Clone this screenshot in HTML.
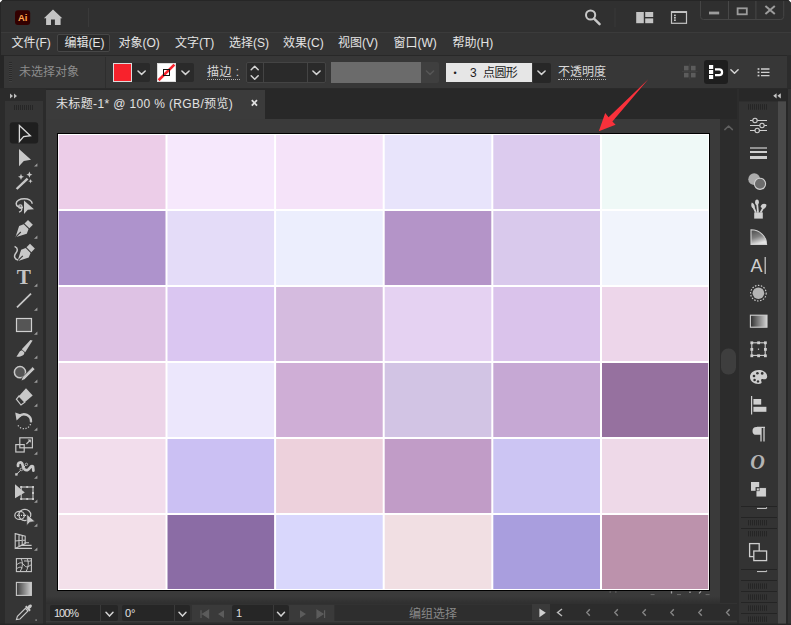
<!DOCTYPE html>
<html lang="zh-CN">
<head>
<meta charset="utf-8">
<title>未标题-1* @ 100 % (RGB/预览)</title>
<style>
*{box-sizing:border-box;margin:0;padding:0}
html,body{width:791px;height:625px;overflow:hidden;background:#323232}
body{font-family:"Liberation Sans","Noto Sans CJK SC",sans-serif;color:#d6d6d6;font-size:12px;position:relative}
.abs{position:absolute}
#titlebar{left:0;top:0;width:791px;height:32px;background:#303030}
#menubar{left:0;top:32px;width:791px;height:23px;background:#333333;box-shadow:inset 0 1px 0 #3b3b3b}
#menubar span{position:absolute;top:3px;height:17px;line-height:17px;font-size:12px;color:#e4e4e4;white-space:nowrap}
#editbox{left:57px;top:2px;width:53px;height:18px;background:#2a2a2a;border:1px solid #474747;border-radius:2px}
#ctrlbar{left:0;top:55px;width:791px;height:34px;background:#373737;box-shadow:inset 0 1px 0 #282828}
#tabbar{left:45px;top:89px;width:693px;height:30px;background:#282828}
#tab{left:1px;top:1px;width:219px;height:29px;background:#3b3b3b}
#tabtext{left:10px;top:6px;letter-spacing:0.36px;font-size:12px;line-height:17px;color:#e2e2e2;white-space:nowrap}
#canvas{left:45px;top:119px;width:675px;height:485px;background:#3a3a3a}
#vscroll{left:720px;top:119px;width:17px;height:485px;background:#2c2c2c}
#lefttool{left:0;top:89px;width:46px;height:536px;background:#353535}
#rightpanel{left:737px;top:89px;width:54px;height:536px;background:#333333}
#statusbar{left:46px;top:603px;width:691px;height:22px;background:#323232}
#artboard{left:56.7px;top:133px;width:653.5px;height:457.8px;background:#fff;border:1px solid #000}
.dk{position:absolute;background:#282828}
.t{position:absolute;white-space:nowrap}
</style>
</head>
<body>
<div id="titlebar" class="abs"></div>
<div id="menubar" class="abs">
<div id="editbox" class="abs"></div>
<span style="left:11.5px">文件(F)</span>
<span style="left:64.5px">编辑(E)</span>
<span style="left:118.5px">对象(O)</span>
<span style="left:175px">文字(T)</span>
<span style="left:229px">选择(S)</span>
<span style="left:283px">效果(C)</span>
<span style="left:338px">视图(V)</span>
<span style="left:393.5px">窗口(W)</span>
<span style="left:452.5px">帮助(H)</span>
</div>
<div id="ctrlbar" class="abs"></div>
<div class="abs" style="left:0;top:55px;width:4px;height:34px;background:#262626"></div>
<div class="abs" style="left:787px;top:55px;width:4px;height:34px;background:#2c2c2c"></div>
<div class="abs" style="left:9px;top:62px;width:3px;height:20px;background:repeating-linear-gradient(to bottom,#2a2a2a 0 1px,#404040 1px 2px)"></div>
<div class="t" style="left:19px;top:64px;font-size:12px;line-height:17px;color:#8c8c8c">未选择对象</div>
<div class="abs" style="left:105px;top:57px;width:1px;height:31px;background:#2e2e2e"></div>
<div class="abs" style="left:113px;top:63px;width:19px;height:19px;background:#f8222c;border:1px solid #dcdcdc"></div>
<div class="abs" style="left:132px;top:63px;width:18px;height:19px;background:#2a2a2a;border-radius:0 2px 2px 0"></div>
<div class="abs" style="left:157px;top:63px;width:19px;height:19px;background:#fff;border:1px solid #dcdcdc"></div>
<div class="abs" style="left:176px;top:63px;width:18px;height:19px;background:#2a2a2a;border-radius:0 2px 2px 0"></div>
<div class="t" style="left:207px;top:64px;font-size:12px;line-height:17px;color:#d8d8d8;border-bottom:1px dotted #b0b0b0;height:16px;letter-spacing:0.5px">描边 :</div>
<div class="abs" style="left:246px;top:62px;width:80px;height:21px;background:#2a2a2a;border:1px solid #444;border-radius:2px"></div>
<div class="abs" style="left:263px;top:63px;width:1px;height:19px;background:#444"></div>
<div class="abs" style="left:307px;top:63px;width:1px;height:19px;background:#444"></div>
<div class="abs" style="left:331px;top:62px;width:90px;height:21px;background:#6b6b6b"></div>
<div class="abs" style="left:421px;top:62px;width:18px;height:21px;background:#3f3f3f;border-radius:0 2px 2px 0"></div>
<div class="abs" style="left:446px;top:63px;width:86px;height:19px;background:#e6e6e6"></div>
<div class="t" style="left:453.6px;top:64.6px;font-size:9px;line-height:17px;color:#1e1e1e">•</div>
<div class="t" style="left:470px;top:65px;font-size:12px;line-height:17px;color:#1e1e1e">3</div>
<div class="t" style="left:483px;top:65px;font-size:12px;letter-spacing:-0.6px;line-height:17px;color:#1e1e1e">点圆形</div>
<div class="abs" style="left:533px;top:62.5px;width:17.5px;height:20px;background:#272727;border-radius:0 2px 2px 0"></div>
<div class="t" style="left:558px;top:64px;font-size:12px;line-height:17px;color:#d8d8d8;border-bottom:1px dotted #b0b0b0;height:16px">不透明度</div>
<div class="abs" style="left:704px;top:60px;width:24px;height:24px;background:#1e1e1e;border-radius:3px"></div>
<div class="abs" style="left:0;top:88px;width:791px;height:1px;background:#2a2a2a"></div>

<div id="tabbar" class="abs"><div id="tab" class="abs"><div id="tabtext" class="abs">未标题-1* @ 100 % (RGB/预览)</div></div></div>
<div id="canvas" class="abs"></div>
<div id="vscroll" class="abs"></div>
<div id="lefttool" class="abs"></div>
<div id="rightpanel" class="abs"></div>
<div id="statusbar" class="abs"></div>
<div class="abs" style="left:50px;top:605px;width:68px;height:16px;background:#262626;border-radius:2px"></div>
<div class="abs" style="left:100px;top:605px;width:1px;height:16px;background:#3a3a3a"></div>
<div class="t" style="left:54px;top:605px;font-size:11px;letter-spacing:-1px;line-height:16px;color:#e0e0e0">100%</div>
<div class="abs" style="left:122px;top:605px;width:68px;height:16px;background:#262626;border-radius:2px"></div>
<div class="abs" style="left:174px;top:605px;width:1px;height:16px;background:#3a3a3a"></div>
<div class="t" style="left:125px;top:605px;font-size:11px;line-height:16px;color:#e0e0e0">0°</div>
<div class="abs" style="left:192px;top:605px;width:142px;height:16px;background:#3a3a3a"></div>
<div class="abs" style="left:232px;top:605px;width:57px;height:16px;background:#262626;border-radius:2px"></div>
<div class="abs" style="left:273px;top:605px;width:1px;height:16px;background:#3a3a3a"></div>
<div class="t" style="left:236px;top:605px;font-size:11px;line-height:16px;color:#e0e0e0">1</div>
<div class="abs" style="left:335px;top:605px;width:199px;height:17px;background:#2e2e2e"></div>
<div class="t" style="left:409px;top:606px;font-size:12px;line-height:17px;color:#888">编组选择</div>
<div class="abs" style="left:550px;top:604px;width:187px;height:16px;background:#2c2c2c"></div>
<div class="abs" style="left:46px;top:621px;width:691px;height:1px;background:#3b3b3b"></div>
<div id="playbtn" class="abs" style="left:532px;top:604px;width:18px;height:16px;background:#3a3a3a"></div>
<div class="abs" style="left:46px;top:596px;width:674px;height:8px;background:linear-gradient(to bottom,#3a3a3a,#2f2f2f)"></div>

<div id="artboard" class="abs"></div>
<svg class="abs" style="left:0;top:0" width="791" height="625" viewBox="0 0 791 625" id="grid">
<rect x="58.7" y="135" width="106.8" height="74" fill="#ECCDE8"/>
<rect x="167.5" y="135" width="106.6" height="74" fill="#F6E8FC"/>
<rect x="276.1" y="135" width="106.6" height="74" fill="#F5E3F9"/>
<rect x="384.7" y="135" width="106.6" height="74" fill="#E8E4FB"/>
<rect x="493.3" y="135" width="106.7" height="74" fill="#DCCBEE"/>
<rect x="602.0" y="135" width="106.2" height="74" fill="#EFF9F7"/>
<rect x="58.7" y="211" width="106.8" height="74" fill="#AE93CC"/>
<rect x="167.5" y="211" width="106.6" height="74" fill="#E4DCF8"/>
<rect x="276.1" y="211" width="106.6" height="74" fill="#ECEEFD"/>
<rect x="384.7" y="211" width="106.6" height="74" fill="#B494C8"/>
<rect x="493.3" y="211" width="106.7" height="74" fill="#D9C9EC"/>
<rect x="602.0" y="211" width="106.2" height="74" fill="#F1F4FC"/>
<rect x="58.7" y="287" width="106.8" height="74" fill="#DEC2E4"/>
<rect x="167.5" y="287" width="106.6" height="74" fill="#DAC6F1"/>
<rect x="276.1" y="287" width="106.6" height="74" fill="#D5BBDF"/>
<rect x="384.7" y="287" width="106.6" height="74" fill="#E5D2F2"/>
<rect x="493.3" y="287" width="106.7" height="74" fill="#DAC3EB"/>
<rect x="602.0" y="287" width="106.2" height="74" fill="#EDD6EA"/>
<rect x="58.7" y="363" width="106.8" height="74" fill="#ECD4E8"/>
<rect x="167.5" y="363" width="106.6" height="74" fill="#ECE7FC"/>
<rect x="276.1" y="363" width="106.6" height="74" fill="#CFAED6"/>
<rect x="384.7" y="363" width="106.6" height="74" fill="#D2C4E4"/>
<rect x="493.3" y="363" width="106.7" height="74" fill="#C6A8D4"/>
<rect x="602.0" y="363" width="106.2" height="74" fill="#96719F"/>
<rect x="58.7" y="439" width="106.8" height="74" fill="#F2DDEC"/>
<rect x="167.5" y="439" width="106.6" height="74" fill="#CBC0F3"/>
<rect x="276.1" y="439" width="106.6" height="74" fill="#EDD1DC"/>
<rect x="384.7" y="439" width="106.6" height="74" fill="#C19CC7"/>
<rect x="493.3" y="439" width="106.7" height="74" fill="#CCC5F3"/>
<rect x="602.0" y="439" width="106.2" height="74" fill="#EED9E8"/>
<rect x="58.7" y="515" width="106.8" height="74" fill="#F3E0EA"/>
<rect x="167.5" y="515" width="106.6" height="74" fill="#8B6CA5"/>
<rect x="276.1" y="515" width="106.6" height="74" fill="#D9D7FC"/>
<rect x="384.7" y="515" width="106.6" height="74" fill="#F1DFE3"/>
<rect x="493.3" y="515" width="106.7" height="74" fill="#A99EDE"/>
<rect x="602.0" y="515" width="106.2" height="74" fill="#BC92AC"/>
</svg>
<svg class="abs" style="left:0;top:0" width="791" height="625" viewBox="0 0 791 625" id="icons">
<path d="M138.0 71.0L141.6 74.4L145.2 71.0" fill="none" stroke="#d4d4d4" stroke-width="1.5" stroke-linecap="round" stroke-linejoin="round"/>
<path d="M181.9 71.0L185.5 74.4L189.1 71.0" fill="none" stroke="#d4d4d4" stroke-width="1.5" stroke-linecap="round" stroke-linejoin="round"/>
<path d="M251.2 69.8L254.7 66.2L258.2 69.8" fill="none" stroke="#d4d4d4" stroke-width="1.5" stroke-linecap="round" stroke-linejoin="round"/>
<path d="M251.2 75.7L254.7 79.3L258.2 75.7" fill="none" stroke="#d4d4d4" stroke-width="1.5" stroke-linecap="round" stroke-linejoin="round"/>
<path d="M312.9 71.0L316.5 74.4L320.1 71.0" fill="none" stroke="#d4d4d4" stroke-width="1.5" stroke-linecap="round" stroke-linejoin="round"/>
<path d="M426.4 71.0L430.0 74.4L433.6 71.0" fill="none" stroke="#565656" stroke-width="1.5" stroke-linecap="round" stroke-linejoin="round"/>
<path d="M537.9 71.0L541.5 74.4L545.1 71.0" fill="none" stroke="#d4d4d4" stroke-width="1.5" stroke-linecap="round" stroke-linejoin="round"/>
<path d="M730.9 69.8L734.5 73.2L738.1 69.8" fill="none" stroke="#d4d4d4" stroke-width="1.5" stroke-linecap="round" stroke-linejoin="round"/>
<path d="M106.0 612.3L109.5 616.1L113.0 612.3" fill="none" stroke="#d4d4d4" stroke-width="1.5" stroke-linecap="round" stroke-linejoin="round"/>
<path d="M179.0 612.3L182.5 616.1L186.0 612.3" fill="none" stroke="#d4d4d4" stroke-width="1.5" stroke-linecap="round" stroke-linejoin="round"/>
<path d="M277.5 612.3L281.0 616.1L284.5 612.3" fill="none" stroke="#d4d4d4" stroke-width="1.5" stroke-linecap="round" stroke-linejoin="round"/>
<path d="M158.6 80.2L174.4 64.6" stroke="#f8222c" stroke-width="2.6" fill="none"/>
<rect x="163.5" y="69.5" width="6" height="6" fill="none" stroke="#111" stroke-width="1"/>
<path d="M648.3 79.3L608.6 117.3L605.2 113L598.8 131.2L615.6 124.8L612.4 121.6Z" fill="#f9313b"/><!-- title bar -->
<rect x="15" y="10.3" width="15.2" height="14.7" rx="3" fill="#330000"/>
<text x="18" y="21.2" font-family="Liberation Sans, sans-serif" font-weight="bold" font-size="9.5" fill="#ffa64d" textLength="9.4" lengthAdjust="spacingAndGlyphs">Ai</text>
<path d="M53 9.4L62.3 18.3H60.6V25H54.9V19.4H51V25H46.1V18.3H43.9Z" fill="#c4c4c4"/>
<rect x="88" y="8" width="1" height="19" fill="#3a3a3a"/>
<!-- search -->
<circle cx="590.6" cy="15" r="4.6" fill="none" stroke="#c8c8c8" stroke-width="2"/>
<path d="M594 18.6L599.6 24.2" stroke="#c8c8c8" stroke-width="2.4" stroke-linecap="round"/>
<rect x="614.5" y="8" width="1" height="19" fill="#383838"/>
<!-- layout icon -->
<rect x="636.2" y="12" width="7.6" height="11.2" fill="#c4c4c4"/>
<rect x="645.2" y="12" width="8" height="5" fill="#c4c4c4"/>
<rect x="645.2" y="18.4" width="8" height="4.8" fill="#c4c4c4"/>
<!-- window icon -->
<rect x="671.5" y="11.7" width="15" height="11.6" fill="none" stroke="#c4c4c4" stroke-width="1.2"/>
<rect x="671.5" y="11.4" width="15" height="1.6" fill="#c4c4c4"/>
<rect x="674" y="14.6" width="1.8" height="1.6" fill="#c4c4c4"/>
<rect x="674" y="17" width="1.8" height="1.6" fill="#c4c4c4"/>
<rect x="674" y="19.4" width="1.8" height="1.6" fill="#c4c4c4"/>
<!-- window controls -->
<path d="M700.5 0V16.5Q700.5 19.5 703.5 19.5H780.7Q783.7 19.5 783.7 16.5V0" fill="#2f2f2f" stroke="#454545" stroke-width="1"/>
<path d="M728.5 0V19.5M755.9 0V19.5" stroke="#484848" stroke-width="1"/>
<rect x="709" y="11.6" width="10.2" height="2.8" fill="#9c9c9c"/>
<rect x="737.6" y="8.3" width="9.2" height="6" fill="none" stroke="#9c9c9c" stroke-width="1.8"/>
<path d="M765.4 6L774.8 14M774.8 6L765.4 14" stroke="#9c9c9c" stroke-width="2"/>
<!-- control bar right icons -->
<rect x="684" y="65.8" width="4.6" height="4.6" fill="#5c5c5c"/>
<rect x="691" y="65.8" width="4.6" height="4.6" fill="#5c5c5c"/>
<rect x="684" y="72.8" width="4.6" height="4.6" fill="#5c5c5c"/>
<rect x="691" y="72.8" width="4.6" height="4.6" fill="#5c5c5c"/>
<path d="M689.8 63.5V79.5M682 71.6H697.6" stroke="#424242" stroke-width="1"/>
<rect x="709" y="65" width="4.2" height="4" fill="#fff"/>
<rect x="709" y="70" width="4.2" height="4" fill="#fff"/>
<rect x="709" y="75" width="4.2" height="4" fill="#fff"/>
<path d="M715 69.3H719.2A2.9 2.9 0 0 1 719.2 75.1H715" fill="none" stroke="#fff" stroke-width="2.2"/>
<!-- list icon -->
<path d="M761 69H769.5M761 72.3H769.5M761 75.6H769.5" stroke="#d0d0d0" stroke-width="1.3"/>
<rect x="757.6" y="68.2" width="1.8" height="1.6" fill="#d0d0d0"/>
<rect x="757.6" y="71.5" width="1.8" height="1.6" fill="#d0d0d0"/>
<rect x="757.6" y="74.8" width="1.8" height="1.6" fill="#d0d0d0"/>
<!-- tab close -->
<path d="M251.8 100.2L257 105.6M257 100.2L251.8 105.6" stroke="#e0e0e0" stroke-width="1.8"/>
<!-- LEFT TOOLBAR -->
<rect x="0" y="89" width="5" height="536" fill="#2b2b2b"/>
<rect x="43" y="89" width="3" height="536" fill="#2b2b2b"/>
<rect x="5" y="89" width="38" height="12" fill="#2b2b2b"/>
<path d="M10 93.4L13 96L10 98.6ZM14 93.4L17 96L14 98.6Z" fill="#bdbdbd"/>
<path d="M14.5 105V110M16.5 105V110M18.5 105V110M20.5 105V110M22.5 105V110M24.5 105V110M26.5 105V110M28.5 105V110M30.5 105V110M32.5 105V110" stroke="#262626" stroke-width="1"/>
<rect x="9.8" y="122.2" width="28.4" height="21.3" rx="3" fill="#1f1f1f"/>
<!-- selection -->
<path d="M19.4 125.6L30.4 135.7L23.6 136.6L19.4 141.5Z" fill="none" stroke="#dadada" stroke-width="1.3" stroke-linejoin="miter"/>
<!-- direct selection -->
<path d="M19 149L31 159.8L23.8 161L19 166.3Z" fill="#c8c8c8"/>
<!-- magic wand -->
<path d="M16.6 189L27.6 178.6" stroke="#c8c8c8" stroke-width="2.4"/>
<path d="M21 173.8L21.9 176L24 176.8L21.9 177.7L21 180L20.1 177.7L18 176.8L20.1 176Z" fill="#c8c8c8"/>
<path d="M29.4 171.6L30.3 173.8L32.4 174.7L30.3 175.6L29.4 177.8L28.5 175.6L26.4 174.7L28.5 173.8Z" fill="#c8c8c8"/>
<path d="M30.5 179L31.1 180.6L32.7 181.2L31.1 181.8L30.5 183.4L29.9 181.8L28.3 181.2L29.9 180.6Z" fill="#c8c8c8"/>
<!-- lasso -->
<path d="M23 207.6C18 207.6 16.2 205.6 16.2 203.6C16.2 200.6 20 198.8 24.2 198.8C28.6 198.8 32.2 200.8 32.2 203.8" fill="none" stroke="#c8c8c8" stroke-width="1.5"/>
<circle cx="20.3" cy="206.6" r="1.7" fill="none" stroke="#c8c8c8" stroke-width="1.2"/>
<path d="M21.6 207.8C22.4 210 21 211.6 19 212.2" fill="none" stroke="#c8c8c8" stroke-width="1.3"/>
<path d="M24 200.4L34 209.2L27.8 209.8L24 214Z" fill="#c8c8c8"/>
<!-- pen -->
<g transform="translate(23.4 229.4) rotate(45) scale(1.08)">
<path d="M0 10.4L-5 0.6L-3.2 -3.6H3.2L5 0.6Z" fill="#c8c8c8"/>
<path d="M0 10.4V3.4" stroke="#353535" stroke-width="1"/>
<rect x="-3.2" y="-9.2" width="6.4" height="4.6" fill="#c8c8c8"/>
</g>
<!-- curvature -->
<g transform="translate(25.4 253.2) rotate(45) scale(1.08)">
<path d="M0 10.4L-5 0.6L-3.2 -3.6H3.2L5 0.6Z" fill="#c8c8c8"/>
<path d="M0 10.4V3.4" stroke="#353535" stroke-width="1"/>
<rect x="-3.2" y="-9.2" width="6.4" height="4.6" fill="#c8c8c8"/>
</g>
<path d="M14.6 246.4C18.6 248.4 17.6 251 15.6 253.4C13.6 256.4 14.6 259.4 18 260" fill="none" stroke="#c8c8c8" stroke-width="1.5"/>
<!-- type -->
<text x="16.8" y="283.7" font-family="Liberation Serif, serif" font-weight="bold" font-size="20.5" fill="#c4c4c4" textLength="14.2" lengthAdjust="spacingAndGlyphs">T</text>
<!-- line -->
<path d="M17 307.4L31 293.6" stroke="#c8c8c8" stroke-width="1.7"/>
<!-- rect -->
<rect x="16.5" y="318.5" width="15" height="13" fill="#555" stroke="#d0d0d0" stroke-width="1.2"/>
<!-- brush -->
<path d="M32.6 340.6L30.4 340L21.8 349.2L25.2 352.2Z" fill="#c8c8c8"/>
<path d="M22 350.2L24.4 352.4C24.6 355 21 357 16.2 356.6C18.4 355 18.6 351 22 350.2Z" fill="#c8c8c8"/>
<!-- shaper -->
<circle cx="20" cy="372.2" r="5.6" fill="#555" stroke="#c8c8c8" stroke-width="1.5"/>
<path d="M32.6 366.8L35 369.2L24.6 379.6L21 381L22.2 377.2Z" fill="#c8c8c8" stroke="#353535" stroke-width="0.8"/>
<!-- eraser -->
<path d="M26 388.3L32.7 395.4L24.8 402.2L19 396Z" fill="#c8c8c8"/>
<path d="M19 396L24.8 402.2L21 405L16.4 399.2Z" fill="none" stroke="#c8c8c8" stroke-width="1.2"/>
<!-- rotate -->
<path d="M19 416.4A7 7 0 0 1 31 421.8" fill="none" stroke="#c8c8c8" stroke-width="2.4"/>
<path d="M31 421.4A7 7 0 0 1 17.4 424" fill="none" stroke="#c8c8c8" stroke-width="1.3" stroke-dasharray="1.2 1.6"/>
<path d="M15.2 412.6L22.4 415L16.6 420.6Z" fill="#c8c8c8"/>
<!-- scale -->
<rect x="19.8" y="437.8" width="12.6" height="10" fill="none" stroke="#c8c8c8" stroke-width="1.2"/>
<rect x="15.8" y="444.6" width="8.4" height="7.4" fill="none" stroke="#c8c8c8" stroke-width="1.2"/>
<path d="M26.4 444L30 440.4" stroke="#c8c8c8" stroke-width="1.2"/>
<path d="M27.6 439.6H30.8V442.8Z" fill="#c8c8c8"/>
<!-- warp -->
<path d="M18 466C17.6 461.6 21.8 461.4 22.6 465C23.4 469 25.4 471.4 28.2 469.6C30.4 468 31.2 465 33 466.6L33.4 470.6" fill="none" stroke="#c8c8c8" stroke-width="2.7" stroke-linecap="round" stroke-linejoin="round"/>
<path d="M16.8 474L26 465" stroke="#c8c8c8" stroke-width="1"/>
<rect x="15.2" y="473.2" width="2.4" height="2.4" fill="#c8c8c8"/>
<circle cx="21.4" cy="469.4" r="1.3" fill="#353535" stroke="#c8c8c8" stroke-width="0.8"/>
<circle cx="26.4" cy="464.4" r="1.2" fill="#353535" stroke="#c8c8c8" stroke-width="0.8"/>
<!-- free transform -->
<rect x="21.2" y="487" width="11.8" height="12" fill="#3c3c3c" stroke="#c8c8c8" stroke-width="1.1"/>
<path d="M15 484.2L24.8 492.6L15 498.2Z" fill="#c8c8c8"/>
<rect x="20.2" y="486" width="2" height="2" fill="#c8c8c8"/><rect x="26.2" y="486" width="2" height="2" fill="#c8c8c8"/><rect x="32" y="486" width="2" height="2" fill="#c8c8c8"/>
<rect x="32" y="492" width="2" height="2" fill="#c8c8c8"/>
<rect x="20.2" y="498" width="2" height="2" fill="#c8c8c8"/><rect x="26.2" y="498" width="2" height="2" fill="#c8c8c8"/><rect x="32" y="498" width="2" height="2" fill="#c8c8c8"/>
<!-- shape builder -->
<ellipse cx="19.6" cy="515.4" rx="4.8" ry="4" fill="none" stroke="#c8c8c8" stroke-width="1.2"/>
<ellipse cx="24.8" cy="515" rx="6" ry="5.6" fill="none" stroke="#c8c8c8" stroke-width="1.2"/>
<path d="M17 515.4H26" stroke="#d8d8d8" stroke-width="1.2" stroke-dasharray="1 1"/>
<path d="M26.8 514.2L35 521.6L29.8 522.2L26.8 525.4Z" fill="#c8c8c8" stroke="#353535" stroke-width="0.6"/>
<!-- perspective grid -->
<path d="M15.2 533.6L25.2 536.2V543.6L15.2 548.4ZM19 534.6V546.6M22.2 535.4V545M15.2 541L25.2 540" fill="none" stroke="#c8c8c8" stroke-width="1.1"/>
<path d="M15.2 548.4H32M20.6 545.4H31.6M24.4 542.8H29" stroke="#c8c8c8" stroke-width="1.1"/>
<!-- mesh -->
<rect x="16.4" y="558.6" width="15" height="13" fill="none" stroke="#c8c8c8" stroke-width="1.1"/>
<path d="M16.4 565C20 562 22 562 24 565C26 568 28 567 31.4 564.6M21 558.6C23 562 23 567 20 571.6M27 558.6C29 562 28.6 567 26 571.6M16.4 569C19 566.6 21 567 22.4 568M24 561C27 560.6 29 562 31.4 560.6" fill="none" stroke="#c8c8c8" stroke-width="1"/>
<!-- gradient -->
<defs><linearGradient id="gl" x1="0" x2="1" y1="0" y2="0"><stop offset="0" stop-color="#3a3a3a"/><stop offset="1" stop-color="#d0d0d0"/></linearGradient></defs>
<rect x="16.4" y="582.4" width="15" height="13" fill="url(#gl)" stroke="#c8c8c8" stroke-width="1.1"/>
<!-- eyedropper -->
<path d="M16.4 619.6L17.4 616.4L25.4 608.4L28 611L20 619Z" fill="#353535" stroke="#c8c8c8" stroke-width="1.1"/>
<path d="M25 607L29.4 611.4L30.8 610L29.6 608.8C32 607.4 32.4 605.6 31.4 604.8C30.4 604 28.8 604.4 27.6 606.8L26.4 605.6Z" fill="#c8c8c8"/>
<!-- submenu triangles -->
<path d="M34 166.6H37.4V163.2ZM34 238.8H37.4V235.4ZM34 286.8H37.4V283.4ZM34 310.8H37.4V307.4ZM34 334.8H37.4V331.4ZM34 358.8H37.4V355.4ZM34 382.8H37.4V379.4ZM34 406.8H37.4V403.4ZM34 430.8H37.4V427.4ZM34 454.8H37.4V451.4ZM34 478.8H37.4V475.4ZM34 502.8H37.4V499.4ZM34 526.8H37.4V523.4ZM34 550.8H37.4V547.4Z" fill="#9a9a9a"/>
<rect x="35.4" y="619.4" width="1.4" height="1.4" fill="#9a9a9a"/>
<!-- RIGHT PANEL -->
<rect x="737" y="89" width="2" height="536" fill="#2c2c2c"/>
<rect x="739" y="89" width="48" height="12.4" fill="#282828"/>
<rect x="778" y="101.4" width="8" height="524" fill="#4a4a4a"/>
<rect x="786" y="89" width="2" height="536" fill="#272727"/>
<path d="M776.6 93.2L773.2 95.8L776.6 98.4ZM780.8 93.2L777.4 95.8L780.8 98.4Z" fill="#c4c4c4"/>
<path d="M748.5 104.2V109.6M750.5 104.2V109.6M752.5 104.2V109.6M754.5 104.2V109.6M756.5 104.2V109.6M758.5 104.2V109.6M760.5 104.2V109.6M762.5 104.2V109.6M764.5 104.2V109.6M766.5 104.2V109.6" stroke="#252525" stroke-width="1"/>
<path d="M750 120.5H767M750 125.5H767M750 130.5H767" stroke="#cfcfcf" stroke-width="1.2"/>
<circle cx="755" cy="120.5" r="2.2" fill="#333333" stroke="#cfcfcf" stroke-width="1.1"/>
<circle cx="762" cy="125.5" r="2.2" fill="#333333" stroke="#cfcfcf" stroke-width="1.1"/>
<circle cx="757.2" cy="130.5" r="2.2" fill="#333333" stroke="#cfcfcf" stroke-width="1.1"/>
<rect x="750" y="147.4" width="17" height="1.2" fill="#cfcfcf"/><rect x="750" y="151" width="17" height="2" fill="#cfcfcf"/><rect x="750" y="156" width="17" height="3" fill="#cfcfcf"/>
<circle cx="754.2" cy="179.2" r="5.9" fill="#acacac"/>
<circle cx="760" cy="183.8" r="5.6" fill="#6c6c6c" stroke="#cfcfcf" stroke-width="1.1"/>
<rect x="754.2" y="212.4" width="8.6" height="6.2" fill="#cfcfcf"/>
<path d="M756 212.6L753.4 207M758 212.6L757.2 204M760.6 212.6L763.4 207.4" stroke="#cfcfcf" stroke-width="1.8"/>
<path d="M751.8 202.6C754.2 203.6 755.4 206 754.4 208.6C751.8 208.8 750.4 206 751.8 202.6Z" fill="#cfcfcf"/>
<ellipse cx="757" cy="202.2" rx="1.9" ry="2.8" fill="#cfcfcf"/>
<path d="M760.6 207C760.8 204.2 763.4 202.8 766.2 204.2C766.8 206.2 765.4 208.4 763.4 209Z" fill="#cfcfcf"/>
<defs><linearGradient id="cg" x1="0" x2="0.35" y1="0" y2="1"><stop offset="0" stop-color="#4a4a4a"/><stop offset="0.55" stop-color="#808080"/><stop offset="1" stop-color="#e4e4e4"/></linearGradient></defs>
<path d="M751 244.4V229.8A15.6 14.6 0 0 1 766.6 244.4Z" fill="url(#cg)" stroke="#cfcfcf" stroke-width="1.1"/>
<text x="750.6" y="272" font-family="Liberation Sans, sans-serif" font-size="18" fill="#cfcfcf" textLength="12" lengthAdjust="spacingAndGlyphs">A</text>
<path d="M765.2 257V274" stroke="#cfcfcf" stroke-width="1.2"/>
<circle cx="758.4" cy="293.2" r="5.8" fill="#b4b4b4"/>
<circle cx="758.4" cy="293.2" r="7.8" fill="none" stroke="#cfcfcf" stroke-width="1.1" stroke-dasharray="1.5 1.5"/>
<defs><linearGradient id="gr" x1="0" x2="1" y1="0" y2="0"><stop offset="0" stop-color="#2e2e2e"/><stop offset="1" stop-color="#d4d4d4"/></linearGradient></defs>
<rect x="750.4" y="315.2" width="16.6" height="12" fill="url(#gr)" stroke="#cfcfcf" stroke-width="1.1"/>
<rect x="751.8" y="342.8" width="13.4" height="12.6" fill="none" stroke="#cfcfcf" stroke-width="1.1"/>
<rect x="750.4" y="341.40000000000003" width="2.8" height="2.8" fill="#cfcfcf"/>
<rect x="750.4" y="348.0" width="2.8" height="2.8" fill="#cfcfcf"/>
<rect x="750.4" y="354.40000000000003" width="2.8" height="2.8" fill="#cfcfcf"/>
<rect x="757.1999999999999" y="341.40000000000003" width="2.8" height="2.8" fill="#cfcfcf"/>
<rect x="757.9" y="348.59999999999997" width="1.2" height="1.2" fill="#cfcfcf"/>
<rect x="757.1999999999999" y="354.40000000000003" width="2.8" height="2.8" fill="#cfcfcf"/>
<rect x="764.0" y="341.40000000000003" width="2.8" height="2.8" fill="#cfcfcf"/>
<rect x="764.0" y="348.0" width="2.8" height="2.8" fill="#cfcfcf"/>
<rect x="764.0" y="354.40000000000003" width="2.8" height="2.8" fill="#cfcfcf"/>
<path d="M758.6 370C763.6 370 767.2 373 767.2 376.4C767.2 379 765 379.6 763.2 379.2C761.4 378.8 760.6 380 761.4 381.4C762.2 383 761 384 758.6 384C753.6 384 750 381 750 377C750 373 753.6 370 758.6 370Z" fill="#cfcfcf"/>
<circle cx="754" cy="376" r="1.3" fill="#333333"/>
<circle cx="757.4" cy="373.2" r="1.3" fill="#333333"/>
<circle cx="762.2" cy="373.4" r="1.3" fill="#333333"/>
<circle cx="754.6" cy="380" r="1.3" fill="#333333"/>
<circle cx="758" cy="381.4" r="1.2" fill="#333333"/>
<path d="M751.6 396V414.6" stroke="#cfcfcf" stroke-width="1.2"/>
<rect x="753.4" y="399" width="7.8" height="5.6" fill="#cfcfcf"/><rect x="753.4" y="406.8" width="13" height="5" fill="#cfcfcf"/>
<path d="M764 427V441.6M761 427V441.6M765 427.4H757" stroke="#cfcfcf" stroke-width="1.3" fill="none"/>
<path d="M761 427H756.4A3.9 3.9 0 0 0 756.4 434.8H761Z" fill="#cfcfcf"/>
<text x="750.2" y="468.6" font-family="Liberation Serif, serif" font-style="italic" font-weight="bold" font-size="20" fill="#b4b4b4" textLength="14.6" lengthAdjust="spacingAndGlyphs">O</text>
<rect x="751" y="482" width="8.2" height="8.8" fill="#cfcfcf"/>
<rect x="756" y="487.6" width="10.4" height="9.4" fill="#cfcfcf" stroke="#333333" stroke-width="0.9"/>
<rect x="756.4" y="488" width="2.8" height="2.8" fill="none" stroke="#333333" stroke-width="0.6"/>
<rect x="741" y="506" width="36" height="1" fill="#242424"/>
<path d="M757 508.4H766.6V507.2" fill="none" stroke="#d0d0d0" stroke-width="1"/>
<rect x="741" y="517" width="36" height="1" fill="#242424"/>
<path d="M748.5 520V525.4M750.5 520V525.4M752.5 520V525.4M754.5 520V525.4M756.5 520V525.4M758.5 520V525.4M760.5 520V525.4M762.5 520V525.4M764.5 520V525.4M766.5 520V525.4" stroke="#252525" stroke-width="1"/>
<rect x="741" y="528" width="36" height="1" fill="#242424"/>
<path d="M748.5 531V536.4M750.5 531V536.4M752.5 531V536.4M754.5 531V536.4M756.5 531V536.4M758.5 531V536.4M760.5 531V536.4M762.5 531V536.4M764.5 531V536.4M766.5 531V536.4" stroke="#252525" stroke-width="1"/>
<rect x="749.6" y="543.6" width="9.6" height="13" fill="none" stroke="#cfcfcf" stroke-width="1.3"/>
<rect x="753.8" y="551" width="12.8" height="9.6" fill="#333333" stroke="#cfcfcf" stroke-width="1.3"/>
<rect x="741" y="569" width="36" height="1" fill="#242424"/>
<path d="M757 571.6H766.6V570.4" fill="none" stroke="#d0d0d0" stroke-width="1"/>
<rect x="741" y="580" width="36" height="1" fill="#242424"/>
<path d="M748.5 583.4V588.8M750.5 583.4V588.8M752.5 583.4V588.8M754.5 583.4V588.8M756.5 583.4V588.8M758.5 583.4V588.8M760.5 583.4V588.8M762.5 583.4V588.8M764.5 583.4V588.8M766.5 583.4V588.8" stroke="#252525" stroke-width="1"/>
<rect x="741" y="591" width="36" height="1" fill="#242424"/>
<path d="M748.5 594.4V599.8M750.5 594.4V599.8M752.5 594.4V599.8M754.5 594.4V599.8M756.5 594.4V599.8M758.5 594.4V599.8M760.5 594.4V599.8M762.5 594.4V599.8M764.5 594.4V599.8M766.5 594.4V599.8" stroke="#252525" stroke-width="1"/>
<rect x="741" y="602" width="36" height="1" fill="#242424"/>
<path d="M748.5 605.4V610.8M750.5 605.4V610.8M752.5 605.4V610.8M754.5 605.4V610.8M756.5 605.4V610.8M758.5 605.4V610.8M760.5 605.4V610.8M762.5 605.4V610.8M764.5 605.4V610.8M766.5 605.4V610.8" stroke="#252525" stroke-width="1"/>
<rect x="741" y="613" width="36" height="1" fill="#242424"/>
<path d="M748.5 616.4V621.8M750.5 616.4V621.8M752.5 616.4V621.8M754.5 616.4V621.8M756.5 616.4V621.8M758.5 616.4V621.8M760.5 616.4V621.8M762.5 616.4V621.8M764.5 616.4V621.8M766.5 616.4V621.8" stroke="#252525" stroke-width="1"/><!-- STATUS / SCROLL -->
<path d="M724.8 129.6L728.6 126L732.4 129.6" fill="none" stroke="#606060" stroke-width="1.5" stroke-linecap="round" stroke-linejoin="round"/>
<rect x="721" y="348.6" width="15" height="26" rx="7" fill="#3e3e3e"/>
<!-- nav buttons -->
<path d="M201 610.2V618M208.6 610.2L202.6 614.1L208.6 618Z" stroke="#5c5c5c" stroke-width="1.2" fill="#5c5c5c"/>
<path d="M224 610.2L218 614.1L224 618Z" fill="#5c5c5c"/>
<path d="M300 610.2L306 614.1L300 618Z" fill="#5c5c5c"/>
<path d="M324.6 610.2V618M317 610.2L323 614.1L317 618Z" stroke="#5c5c5c" stroke-width="1.2" fill="#5c5c5c"/>
<path d="M539.4 608.4L545.8 612.8L539.4 617.2Z" fill="#d0d0d0"/>
<path d="M562 609L557.6 612.5L562 616" fill="none" stroke="#b8b8b8" stroke-width="1.5"/>
<path d="M589.8 609.2L586.8 612.5L589.8 615.8M617.8 609.2L614.8 612.5L617.8 615.8M645.8 609.2L642.8 612.5L645.8 615.8M673.8 609.2L670.8 612.5L673.8 615.8M701.8 609.2L698.8 612.5L701.8 615.8M729.6 609.2L726.6 612.5L729.6 615.8" fill="none" stroke="#858585" stroke-width="1.4"/>
<!-- window frame details -->
<rect x="0" y="0" width="791" height="1" fill="#262626"/>
<rect x="0" y="0" width="1" height="55" fill="#262626"/>
<path d="M0 0H2.4L0 2.4Z" fill="#fff"/>
<path d="M791 0H788.6L791 2.4Z" fill="#fff"/>
<!-- faint specks under artboard -->
<path d="M671.5 591.2V593.6M690 591.4V593M699 593.4L701 591.4" stroke="#c8c8c8" stroke-width="1.3" opacity="0.75"/>
<path d="M650.6 594.6H654.6M677 594.6H681M705.6 594.6H709.6M609.4 592H611M615 592H616.6" stroke="#6a6a6a" stroke-width="1"/>
<rect x="0" y="623.6" width="791" height="1.4" fill="#262626"/>

</svg>
</body>
</html>
